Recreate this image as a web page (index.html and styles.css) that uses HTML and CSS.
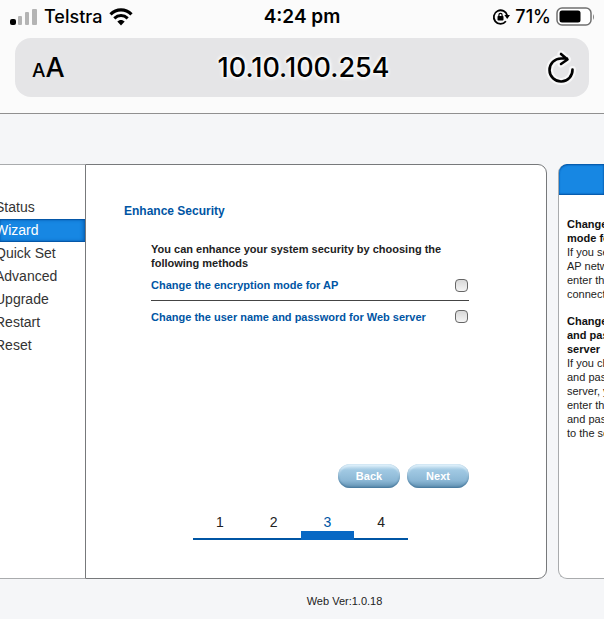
FILE: index.html
```html
<!DOCTYPE html>
<html lang="en">
<head>
	<meta charset="utf-8">
	<meta name="viewport" content="width=device-width, initial-scale=1">
	<title>Wizard</title>
	<link rel="stylesheet" href="styles.css">
</head>
<body>
	<header class="browser">
		<div class="statusbar">
			<div class="carrier">
				<svg width="28" height="20" viewBox="0 0 28 20" aria-hidden="true">
					<rect x="1" y="12" width="6" height="6" rx="2" fill="#000"/>
					<rect x="9" y="9" width="4" height="9" rx="1" fill="#b4b4b4"/>
					<rect x="16" y="5" width="4" height="13" rx="1" fill="#b4b4b4"/>
					<rect x="23" y="2" width="5" height="16" rx="1" fill="#b4b4b4"/>
				</svg>
				<span>Telstra</span>
				<svg width="24" height="18" viewBox="0 0 24 18" aria-hidden="true">
					<path d="M1.500 6.300C7.500 .4 16.500 .4 22.500 6.300" fill="none" stroke="#000" stroke-width="3.200"/>
					<path d="M5.300 10.300C9.300 6.500 14.700 6.500 18.700 10.300" fill="none" stroke="#000" stroke-width="3"/>
					<path d="M8.300 13.600C10.300 11.400 13.700 11.400 15.700 13.600L12 17.500z"/>
				</svg>
			</div>
			<div class="clock">4:24 pm</div>
			<div class="power">
				<svg width="18" height="18" viewBox="0 0 18 18" aria-hidden="true">
					<path d="M13.900 13.300A6.800 6.800 0 1 1 15.200 7.500" fill="none" stroke="#000" stroke-width="1.800"/>
					<path d="M12.400 7h5.600l-2.800 4z"/>
					<rect x="5.500" y="8" width="6" height="4.500" rx=".8"/>
					<path d="M6.900 8.500V7a1.600 1.600 0 0 1 3.200 0v1.500" fill="none" stroke="#000" stroke-width="1.200"/>
				</svg>
				<span>71%</span>
				<svg width="39" height="20" viewBox="0 0 39 20" aria-hidden="true">
					<rect x="1" y="1" width="34" height="17" rx="5" fill="#fff" stroke="#707070" stroke-width="1.500"/>
					<rect x="3.500" y="3.500" width="21" height="12" rx="2.500"/>
					<path d="M37 7q2 3 0 6z" fill="#808080"/>
				</svg>
			</div>
		</div>
		<div class="addressbar">
			<button class="textsize" type="button" aria-label="Text size"><small>A</small>A</button>
			<span class="url">10.10.100.254</span>
			<button class="reload" type="button" aria-label="Reload">
				<svg width="28" height="32" viewBox="0 0 28 32">
					<g fill="none" stroke-linecap="round" stroke-linejoin="round">
						<path d="M25.500 17.500A11.500 11.500 0 1 1 14 6.500h6M14 2L20.500 7.500L14 12" stroke="#fff" stroke-width="7" opacity=".7"/>
						<path d="M25.500 17.500A11.500 11.500 0 1 1 14 6.500h6M14 2L20.500 7.500L14 12" stroke="#000" stroke-width="2.600"/>
					</g>
				</svg>
			</button>
		</div>
	</header>

	<div class="page">
		<nav class="menu">
			<ul>
				<li><a href="#">Status</a></li>
				<li class="active"><a href="#">Wizard</a></li>
				<li><a href="#">Quick Set</a></li>
				<li><a href="#">Advanced</a></li>
				<li><a href="#">Upgrade</a></li>
				<li><a href="#">Restart</a></li>
				<li><a href="#">Reset</a></li>
			</ul>
		</nav>

		<main class="content">
			<h1>Enhance Security</h1>
			<form class="options">
				<p>You can enhance your system security by choosing the following methods</p>
				<div class="option">
					<label for="encryption">Change the encryption mode for AP</label>
					<input type="checkbox" id="encryption">
				</div>
				<div class="option">
					<label for="password">Change the user name and password for Web server</label>
					<input type="checkbox" id="password">
				</div>
				<div class="buttons">
					<button class="btn" type="button">Back</button>
					<button class="btn" type="button">Next</button>
				</div>
			</form>
			<ol class="steps">
				<li>1</li>
				<li>2</li>
				<li class="current">3</li>
				<li>4</li>
			</ol>
		</main>

		<aside class="help">
			<div class="help-head"></div>
			<div class="help-text">
				<h2>Change<br>mode fo</h2>
				<p>If you se<br>AP netw<br>enter the<br>connect</p>
				<h2>Change<br>and pas<br>server</h2>
				<p>If you ch<br>and pas<br>server, y<br>enter the<br>and pas<br>to the se</p>
			</div>
		</aside>
	</div>

	<footer class="version">Web Ver:1.0.18</footer>
</body>
</html>
```
FILE: styles.css
```css
* {
	box-sizing: border-box;
}
body {
	margin: 0;
	background: #f5f6f8;
	color: #222;
	font-family: "Liberation Sans", Arial, sans-serif;
	font-size: 11px;
	line-height: 14px;
	overflow: hidden;
}
h1, h2, p, ul, ol {
	margin: 0;
	padding: 0;
}
ul, ol {
	list-style: none;
}
button {
	border: 0;
	padding: 0;
	background: none;
	color: inherit;
	font-family: inherit;
}

/* phone browser bar */
.browser {
	height: 114px;
	background: #fbfbfb;
	border-bottom: 1px solid #909090;
	color: #000;
	font-family: Inter, Roboto, sans-serif;
	font-weight: 500;
}
.statusbar {
	display: grid;
	grid-template-columns: 1fr auto 1fr;
	align-items: center;
	height: 38px;
	padding: 0 9px 4px;
	font-size: 18px;
	line-height: 24px;
}
.carrier, .power {
	display: flex;
	align-items: center;
	gap: 7px;
}
.power {
	justify-content: flex-end;
	gap: 5px;
}
.clock {
	font-size: 19px;
	font-weight: 600;
}
.addressbar {
	display: grid;
	grid-template-columns: 1fr auto 1fr;
	align-items: center;
	height: 59px;
	margin: 0 15px;
	padding: 0 14px 0 17px;
	border-radius: 16px;
	background: #e5e5e7;
	text-shadow: 0 0 2px #fff, 0 0 3px #fff, 0 0 4px #fff, 0 0 5px #fff;
}
.textsize {
	justify-self: start;
	padding-top: 4px;
	font-size: 27px;
	font-weight: 500;
	line-height: 32px;
}
.textsize small {
	font-size: 19px;
}
.url {
	font-size: 27px;
	line-height: 32px;
}
.reload {
	justify-self: end;
	height: 32px;
}
.reload svg {
	display: block;
	overflow: visible;
}

/* three columns */
.page {
	display: grid;
	grid-template-columns: 85px 1fr 46px;
	height: 415px;
	margin-top: 50px;
}
.menu {
	padding-top: 31px;
	border: solid #a9abad;
	border-width: 1px 0;
	background: #fff;
}
.menu li {
	height: 23px;
	font-size: 14px;
	line-height: 23px;
}
.menu a {
	margin-left: -5px;
	color: #333;
	text-decoration: none;
}
.menu .active {
	background: #1787e3;
	box-shadow: inset -1px 0 4px #0455a5, inset 0 1px 1px #0455a5, inset 0 -1px 1px #0455a5;
}
.menu .active a {
	color: #fff;
}
.content {
	margin-right: 11px;
	padding: 39px 77px 0 38px;
	border: 1px solid #77797b;
	border-radius: 0 9px 9px 0;
	background: #fff;
}
.content h1 {
	color: #0055a4;
	font-size: 12px;
	line-height: 14px;
}
.options {
	padding: 24px 0 0 27px;
	font-weight: bold;
}
.option {
	display: flex;
	align-items: center;
	justify-content: space-between;
	height: 30px;
	color: #0055a4;
}
.option + .option {
	height: 32px;
	border-top: 1px solid #444;
}
.option input {
	appearance: none;
	width: 13px;
	height: 13px;
	margin: 0 1px;
	border: 1px solid #666;
	border-radius: 4px;
	background: linear-gradient(#d8d8d8, #f4f4f4);
}
.buttons {
	display: flex;
	justify-content: flex-end;
	gap: 7px;
	margin-top: 132px;
}
.btn {
	width: 62px;
	height: 24px;
	border-radius: 12px;
	background: linear-gradient(#e4f3fc, #a1c9e3 25%, #8bb7d5 70%, #5e8eaf);
	box-shadow: inset 0 -1px 2px #45779b, inset 0 2px 2px #dceffa;
	color: #fff;
	font-size: 11px;
	font-weight: bold;
}
.steps {
	display: grid;
	grid-template-columns: repeat(4, 1fr);
	margin: 25px 61px 0 69px;
	font-size: 14px;
	line-height: 18px;
	text-align: center;
}
.steps li {
	height: 27px;
	border-bottom: 2px solid #0055a4;
}
.steps .current {
	border-bottom: 9px solid #0868c4;
	color: #0055a4;
}

/* help column, runs off the right edge */
.help {
	overflow: hidden;
	border: solid #a9abad;
	border-width: 0 0 1px 1px;
	border-radius: 9px 0 0 9px;
	background: #fff;
	white-space: nowrap;
}
.help-head {
	height: 31px;
	margin-left: -1px;
	border-radius: 9px 0 0 0;
	background: #1787e3;
	box-shadow: inset 1px 0 2px #0455a5, inset 0 1px 2px #0455a5, inset 0 -1px 2px #0455a5;
}
.help-text {
	padding: 22px 0 0 8px;
}
.help-text h2 {
	color: #111;
	font-size: 11px;
}
.help-text p {
	margin-bottom: 13px;
}

.version {
	padding: 15px 0 11px 85px;
	text-align: center;
}
```
